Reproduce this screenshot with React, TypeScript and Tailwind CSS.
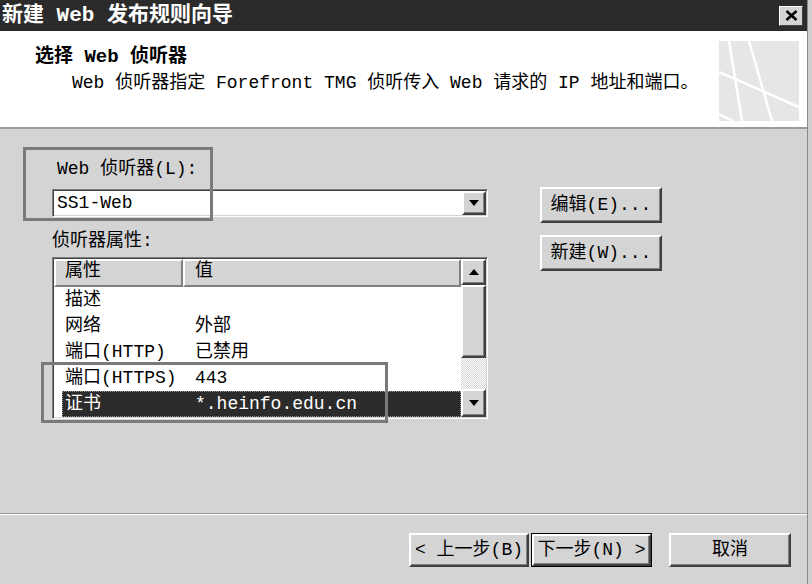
import React from 'react';

const Btn: React.FC<{ className?: string; children: React.ReactNode }> = ({ className = '', children }) => (
  <div
    className={`flex items-center justify-center bg-[#d4d4d4] border-2 border-t-white border-l-white border-r-[#404040] border-b-[#404040] shadow-[inset_-1px_-1px_0_#808080] text-[18px] leading-none text-black ${className}`}
  >
    {children}
  </div>
);

const Arrow: React.FC<{ up?: boolean }> = ({ up }) => (
  <svg width="10" height="6" viewBox="0 0 10 6">
    {up ? <polygon points="0,6 10,6 5,0" fill="#000" /> : <polygon points="0,0 10,0 5,6" fill="#000" />}
  </svg>
);

const ROWS = [
  { k: '描述', v: '' },
  { k: '网络', v: '外部' },
  { k: '端口(HTTP)', v: '已禁用' },
  { k: '端口(HTTPS)', v: '443' },
  { k: '证书', v: '*.heinfo.edu.cn', sel: true },
];

export default function App() {
  return (
    <div className="w-[812px] h-[584px] overflow-hidden bg-[#cfcfcf] flex font-['Liberation_Mono','Noto_Sans_CJK_SC',monospace] text-black">
      <div className="w-[808px] h-full flex flex-col bg-[#d4d4d4] border-r border-[#8a8a8a]">
        {/* title bar */}
        <div className="h-[31px] shrink-0 bg-[#2b2b2b] flex items-center justify-between pl-[2px] pr-[4px]">
          <span className="text-white font-bold text-[21px] leading-none">新建 Web 发布规则向导</span>
          <div className="w-[24px] h-[20px] flex items-center justify-center bg-[#d4d4d4] border border-t-white border-l-white border-r-[#404040] border-b-[#404040]">
            <svg width="13" height="11" viewBox="0 0 13 11">
              <path d="M1.5 1 L11.5 10 M11.5 1 L1.5 10" stroke="#000" strokeWidth="2.6" />
            </svg>
          </div>
        </div>

        {/* header */}
        <div className="h-[98px] shrink-0 bg-white border-b-2 border-[#9c9c9c] flex justify-between pl-[35px] pr-[8px]">
          <div className="pt-[13px]">
            <div className="h-[26px] leading-[26px] text-[19px] font-bold">选择 Web 侦听器</div>
            <div className="h-[26px] leading-[26px] text-[18px] pl-[37px]">
              Web 侦听器指定 Forefront TMG 侦听传入 Web 请求的 IP 地址和端口。
            </div>
          </div>
          <svg width="80" height="80" viewBox="0 0 80 80" className="mt-[10px]">
            <rect width="80" height="80" fill="#e6e6e6" />
            <g stroke="#fff" strokeWidth="2.5">
              <line x1="10" y1="0" x2="23" y2="80" />
              <line x1="30" y1="0" x2="53" y2="80" />
              <line x1="0" y1="31" x2="80" y2="66" />
              <line x1="0" y1="73" x2="14" y2="80" />
            </g>
          </svg>
        </div>

        {/* body */}
        <div className="relative flex-1 flex gap-[52px] pl-[52px] pt-[27px]">
          <div className="w-[436px] flex flex-col">
            <div className="h-[26px] leading-[26px] text-[18px] pl-[5px]">Web 侦听器(L):</div>
            <div className="mt-[7px] h-[28px] flex p-[1px] bg-white border border-t-[#808080] border-l-[#808080] border-b-white border-r-white shadow-[inset_1px_1px_0_#404040,inset_-1px_-1px_0_#d4d4d4]">
              <div className="flex-1 bg-white pl-[3px] text-[18px] leading-[24px]">SS1-Web</div>
              <Btn className="w-[24px] h-[24px]">
                <Arrow />
              </Btn>
            </div>
            <div className="mt-[11px] h-[26px] leading-[26px] text-[18px]">侦听器属性:</div>
            <div className="mt-[3px] h-[162px] flex p-[1px] bg-white border border-t-[#808080] border-l-[#808080] border-b-white border-r-white shadow-[inset_1px_1px_0_#404040,inset_-1px_-1px_0_#d4d4d4]">
              <div className="flex-1 bg-white flex flex-col overflow-hidden">
                <div className="h-[28px] shrink-0 flex">
                  <div className="w-[129px] bg-[#d4d4d4] border-2 border-t-white border-l-white border-r-[#808080] border-b-[#808080] pl-[9px] text-[18px] leading-[20px]">属性</div>
                  <div className="flex-1 bg-[#d4d4d4] border-2 border-t-white border-l-white border-r-[#808080] border-b-[#808080] pl-[10px] text-[18px] leading-[20px]">值</div>
                </div>
                {ROWS.map((r) => (
                  <div
                    key={r.k}
                    className={`h-[26px] shrink-0 ml-[8px] flex text-[18px] leading-[26px] ${r.sel ? 'bg-[#2b2b2b] text-white outline-1 outline-dotted outline-[#9a9a9a] -outline-offset-1' : ''}`}
                  >
                    <span className="w-[133px] pl-[3px] whitespace-nowrap">{r.k}</span>
                    <span className="whitespace-nowrap">{r.v}</span>
                  </div>
                ))}
              </div>
              <div className="w-[25px] flex flex-col">
                <Btn className="h-[26px]">
                  <Arrow up />
                </Btn>
                <Btn className="h-[73px]">{null}</Btn>
                <div className="h-[31px] bg-[repeating-conic-gradient(#ffffff_0_25%,#d4d4d4_0_50%)] bg-[length:2px_2px]" />
                <Btn className="h-[28px]">
                  <Arrow />
                </Btn>
              </div>
            </div>
          </div>

          <div className="w-[122px] flex flex-col gap-[12px] pt-[31px]">
            <Btn className="h-[36px]">编辑(E)...</Btn>
            <Btn className="h-[36px]">新建(W)...</Btn>
          </div>

          {/* annotation boxes */}
          <div className="absolute left-[23px] top-[18px] w-[190px] h-[74px] border-[3px] border-[#7a7a7a]" />
          <div className="absolute left-[41px] top-[233px] w-[347px] h-[61px] border-[3px] border-[#7a7a7a]" />
        </div>

        {/* footer */}
        <div className="h-[2px] shrink-0 border-t border-[#9c9c9c] border-b border-b-white" />
        <div className="h-[69px] shrink-0 flex justify-end items-start pt-[18px] pr-[16px]">
          <Btn className="w-[120px] h-[34px]">&lt; 上一步(B)</Btn>
          <div className="ml-[2px] w-[121px] h-[34px] border border-black flex">
            <Btn className="flex-1">下一步(N) &gt;</Btn>
          </div>
          <Btn className="ml-[17px] w-[122px] h-[34px]">取消</Btn>
        </div>
      </div>
    </div>
  );
}
